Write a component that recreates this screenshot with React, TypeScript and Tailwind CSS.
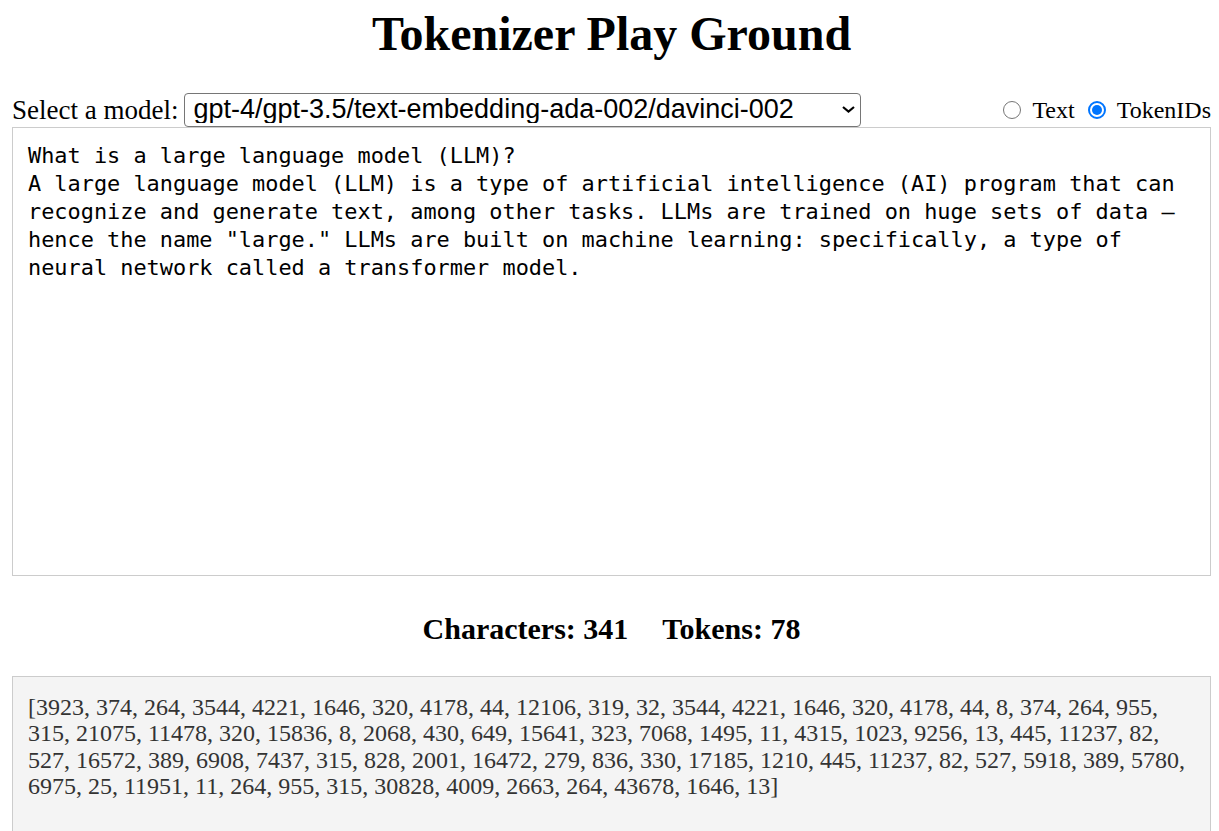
import { useState } from 'react';

const SAMPLE =
  'What is a large language model (LLM)?\nA large language model (LLM) is a type of artificial intelligence (AI) program that can recognize and generate text, among other tasks. LLMs are trained on huge sets of data — hence the name "large." LLMs are built on machine learning: specifically, a type of neural network called a transformer model.\n';

const TOKENS = [
  3923, 374, 264, 3544, 4221, 1646, 320, 4178, 44, 12106, 319, 32, 3544, 4221, 1646, 320, 4178, 44, 8, 374, 264, 955,
  315, 21075, 11478, 320, 15836, 8, 2068, 430, 649, 15641, 323, 7068, 1495, 11, 4315, 1023, 9256, 13, 445, 11237, 82,
  527, 16572, 389, 6908, 7437, 315, 828, 2001, 16472, 279, 836, 330, 17185, 1210, 445, 11237, 82, 527, 5918, 389, 5780,
  6975, 25, 11951, 11, 264, 955, 315, 30828, 4009, 2663, 264, 43678, 1646, 13,
];

function Radio({ checked, label, onClick }: { checked: boolean; label: string; onClick: () => void }) {
  return (
    <label className="flex items-center cursor-pointer" onClick={onClick}>
      {checked ? (
        <span className="w-[18px] h-[18px] rounded-full border-[2px] border-[#0075ff] flex items-center justify-center">
          <span className="w-[10px] h-[10px] rounded-full bg-[#0075ff]" />
        </span>
      ) : (
        <span className="w-[18px] h-[18px] rounded-full border-[1.5px] border-[#767676] bg-white" />
      )}
      <span className="ml-[11px]">{label}</span>
    </label>
  );
}

export default function App() {
  const [text, setText] = useState(SAMPLE);
  const [mode, setMode] = useState<'text' | 'ids'>('ids');

  return (
    <div className="min-h-screen bg-white text-black pl-[12px] pr-[8px] font-['Liberation_Serif','Times_New_Roman',serif]">
      <h1 className="pt-[6px] text-center text-[48px] leading-[55px] font-bold">Tokenizer Play Ground</h1>

      <div className="mt-[32px] h-[34px] flex items-center justify-between text-[24px]">
        <div className="flex items-center">
          <span className="text-[27px]">Select a model:</span>
          <div className="relative ml-[6px]">
            <select className="appearance-none w-[677px] h-[34px] pl-[8px] border border-[#767676] rounded-[4px] bg-white text-[27px] font-['Liberation_Sans',Arial,sans-serif] leading-none">
              <option>gpt-4/gpt-3.5/text-embedding-ada-002/davinci-002</option>
            </select>
            <svg
              className="absolute right-[5px] top-[12px] w-[15px] h-[10px] pointer-events-none"
              viewBox="0 0 15 10"
              fill="none"
              stroke="black"
              strokeWidth={2.2}
            >
              <path d="M2 3l5.5 4.5 5.5-4.5" />
            </svg>
          </div>
        </div>
        <div className="flex items-center gap-[13px]">
          <Radio checked={mode === 'text'} label="Text" onClick={() => setMode('text')} />
          <Radio checked={mode === 'ids'} label="TokenIDs" onClick={() => setMode('ids')} />
        </div>
      </div>

      <textarea
        value={text}
        onChange={(e) => setText(e.target.value)}
        className="block w-full h-[449px] border border-[#cccccc] px-[15px] pt-[14px] resize-none outline-none text-[21.9px] leading-[28px] font-['DejaVu_Sans_Mono','Liberation_Mono',monospace]"
      />

      <div className="mt-[30px] text-center text-[30px] font-bold">
        <span>Characters: {text.length}</span>
        <span className="ml-[34px]">Tokens: {TOKENS.length}</span>
      </div>

      <div className="mt-[25px] h-[200px] border border-[#cccccc] bg-[#f4f4f4] px-[15px] pt-[17px] text-[24px] leading-[26.4px] text-[#333333]">
        [{TOKENS.join(', ')}]
      </div>
    </div>
  );
}
